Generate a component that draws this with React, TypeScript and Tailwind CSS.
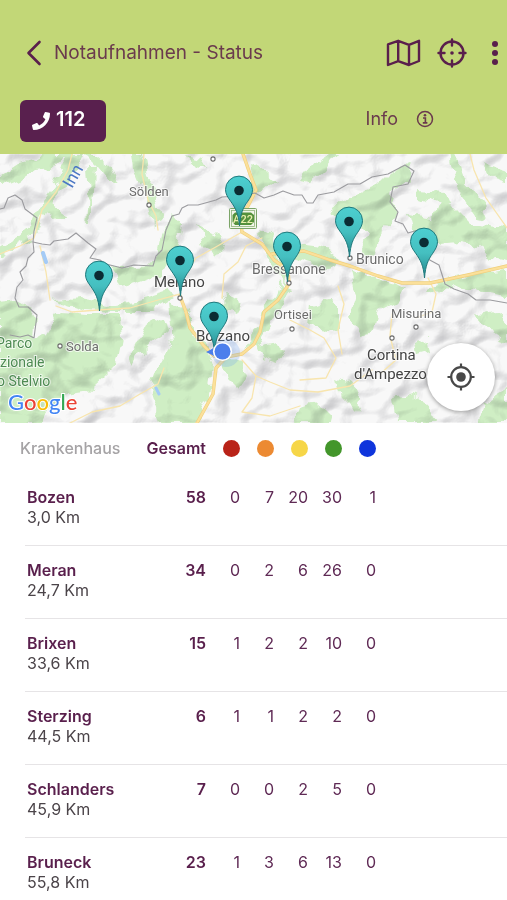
import { FaPhone } from 'react-icons/fa';

type Hospital = {
  name: string;
  distance: string;
  total: number;
  counts: number[];
};

const HOSPITALS: Hospital[] = [
  { name: 'Bozen', distance: '3,0 Km', total: 58, counts: [0, 7, 20, 30, 1] },
  { name: 'Meran', distance: '24,7 Km', total: 34, counts: [0, 2, 6, 26, 0] },
  { name: 'Brixen', distance: '33,6 Km', total: 15, counts: [1, 2, 2, 10, 0] },
  { name: 'Sterzing', distance: '44,5 Km', total: 6, counts: [1, 1, 2, 2, 0] },
  { name: 'Schlanders', distance: '45,9 Km', total: 7, counts: [0, 0, 2, 5, 0] },
  { name: 'Bruneck', distance: '55,8 Km', total: 23, counts: [1, 3, 6, 13, 0] },
];

const TRIAGE = [
  { label: 'Rot', color: 'bg-[#b92318]' },
  { label: 'Orange', color: 'bg-[#ec8a32]' },
  { label: 'Gelb', color: 'bg-[#f6d648]' },
  { label: 'Grün', color: 'bg-[#43962b]' },
  { label: 'Blau', color: 'bg-[#0f35dc]' },
];

// x, top of the pin on the map canvas
const PINS = [
  [239, 22],
  [349, 53],
  [287, 78],
  [424, 74],
  [180, 92],
  [99, 107],
  [214, 148],
];

const FORESTS = [
  'M0 22 L18 10 L34 6 L44 0 L70 0 L52 14 L34 16 L20 26 L0 34Z',
  'M66 0 L82 0 L76 14 L68 26 L58 36 L52 50 L62 56 L64 66 L54 66 L44 60 L36 80 L22 90 L0 102 L0 94 L18 84 L32 72 L42 46 L56 28Z',
  'M84 0 L96 0 L112 14 L120 30 L110 28 L98 14Z',
  'M88 12 L95 12 L94 40 L92 72 L88 70 L90 40Z',
  'M134 0 L142 0 L146 22 L154 32 L160 60 L154 72 L150 50 L142 30 L136 16Z',
  'M170 58 L182 72 L178 96 L168 112 L156 122 L140 128 L120 134 L110 110 L122 114 L153 112 L160 96 L164 76Z',
  'M185 0 L200 4 L206 14 L196 12Z',
  'M248 6 L258 12 L276 28 L264 38 L252 36Z',
  'M300 26 L312 10 L328 0 L336 0 L324 16 L310 28Z',
  'M330 58 L350 42 L374 34 L392 16 L406 11 L413 18 L408 30 L393 35 L390 48 L398 60 L395 67 L380 74 L378 100 L368 108 L360 96 L366 82 L350 66Z',
  'M408 60 L432 64 L440 44 L452 52 L470 70 L507 74 L507 106 L490 102 L474 92 L460 90 L440 92 L412 74Z',
  'M450 0 L462 4 L466 26 L480 46 L486 62 L474 60 L460 40 L454 22Z',
  'M418 36 L446 38 L450 48 L436 50 L420 44Z',
  'M482 10 L507 18 L507 28 L490 24Z',
  'M260 76 L274 82 L280 102 L290 112 L284 130 L274 112 L262 98Z',
  'M290 88 L320 92 L340 106 L330 116 L312 108 L296 104Z',
  'M350 118 L376 124 L410 134 L396 148 L380 156 L376 176 L362 180 L350 164 L356 146Z',
  'M426 134 L456 122 L507 116 L507 142 L490 140 L470 136 L452 130 L440 140Z',
  'M0 150 L18 148 L30 154 L36 164 L34 186 L46 178 L56 162 L62 158 L90 160 L118 160 L121 184 L116 210 L104 222 L86 238 L72 240 L52 250 L40 269 L0 269Z',
  'M52 146 L80 144 L110 150 L136 146 L170 136 L176 142 L150 158 L116 158 L84 156Z',
  'M168 148 L184 154 L194 176 L206 192 L214 212 L210 240 L196 269 L176 269 L160 269 L150 236 L158 214 L172 190Z',
  'M146 172 L164 162 L168 176 L150 190 L140 202 L132 214 L130 204Z',
  'M220 204 L240 206 L248 224 L240 236 L226 222Z',
  'M278 128 L290 134 L282 150 L270 170 L258 190 L248 196 L262 168Z',
  'M312 150 L330 146 L338 152 L338 178 L322 176 L310 168Z',
  'M256 190 L276 186 L286 196 L280 210 L262 204Z',
  'M300 254 L320 250 L332 262 L330 269 L294 269Z',
  'M338 224 L352 230 L362 246 L356 258 L342 244Z',
  'M394 244 L410 240 L430 252 L440 269 L398 269Z',
  'M414 190 L428 186 L430 198 L416 202Z',
  'M474 160 L492 156 L507 168 L507 190 L492 180Z',
  'M484 246 L507 232 L507 269 L478 269Z',
  'M218 152 L228 140 L242 150 L236 160Z',
  'M196 70 L210 78 L224 92 L216 104 L204 92Z',
];

const MINOR_ROADS = [
  'M72 0 L68 16 L56 38 L42 56 L34 84 L20 92 L0 100',
  'M40 92 L46 118 L50 146',
  'M144 0 L142 20 L148 46 L156 62 L158 76',
  'M470 0 L474 16 L486 44 L507 74',
  'M56 152 L72 158 L98 156 L130 154 L158 146 L180 140',
  'M70 269 L92 258 L120 252 L140 240 L158 230 L164 214',
  'M242 78 L228 86 L214 94 L196 104 L184 122',
  'M262 84 L246 92 L238 108 L224 120 L222 144',
  'M242 206 L256 222 L270 228 L290 236 L318 238 L350 232 L372 216',
  'M290 166 L310 176 L324 184 L336 204 L326 224 L300 226',
  'M256 222 L252 244 L242 258 L270 262 L300 252',
  'M392 160 L390 182 L396 206 L380 220',
  'M416 164 L432 158 L436 140 L428 124',
  'M338 132 L344 150 L338 176 L342 200',
];

const MAIN_ROADS = [
  'M243 0 L250 20 L256 36 L248 52 L240 62 L242 78 L262 90 L274 106 L288 116 L289 130 L278 146 L264 158 L260 178 L254 190 L242 200 L226 203 L216 214 L213 240 L197 269',
  'M272 100 L304 97 L330 106 L350 112 L378 122 L402 129 L430 129 L468 121 L507 112',
  'M180 142 L186 158 L190 174 L204 192 L214 202',
];

const BORDERS = [
  'M0 55 L4 54 L8 44 L15 41 L22 46 L25 55 L37 64 L34 77 L33 88 L42 90 L50 91 L54 87 L68 85 L76 79 L82 84 L88 89 L96 95 L90 104 L100 106 L106 110 L122 114 L134 111 L153 112 L156 102 L162 96 L166 76 L172 62 L179 60 L182 54 L188 51 L198 51 L216 46 L222 43 L240 42 L255 39 L264 44 L274 41 L283 37 L294 41 L302 41 L307 49 L313 49 L318 41 L334 38 L348 30 L360 30 L372 23 L388 20 L405 11 L414 17 L408 30 L393 33 L390 48 L398 58 L395 67 L403 70 L408 79 L418 76 L426 104 L439 111 L445 130 L454 135 L468 140 L476 146 L490 146 L507 149',
  'M33 88 L34 98 L28 104 L26 112 L20 118 L23 126 L17 133 L15 144 L19 153 L28 153 L37 161 L34 184 L28 181 L20 183 L10 181',
];

// marker circle and label of every town
const TOWNS = [
  { name: 'Sölden', x: 129, y: 42, size: 13, dot: [149, 51] },
  { name: 'Bressanone', x: 252, y: 120, size: 14, dot: [289, 129] },
  { name: 'Brunico', x: 356, y: 110, size: 14, dot: [350, 104] },
  { name: 'Ortisei', x: 274, y: 165, size: 13, dot: [292, 175] },
  { name: 'Misurina', x: 391, y: 164, size: 13, dot: [416, 173] },
  { name: 'Solda', x: 66, y: 197, size: 13, dot: [60, 192] },
];

const CITIES = [
  { name: 'Merano', x: 154, y: 133, size: 15, dot: [180, 144] },
  { name: 'Bolzano', x: 196, y: 187, size: 15, dot: [214, 197] },
  { name: 'Cortina', x: 367, y: 206, size: 15, dot: [392, 184] },
  { name: "d'Ampezzo", x: 354, y: 225, size: 15 },
];

function Pin({ x, y }: { x: number; y: number }) {
  return (
    <g transform={`translate(${x} ${y})`}>
      <path
        d="M0.5 50 C-0.6 37 -3.6 32 -8.4 25.2 C-11.4 21 -13.5 18 -13.5 13.6 A13.5 13.5 0 0 1 13.5 13.6 C13.5 18 11.6 21 8.8 25.2 C4 32 1.6 37 0.5 50Z"
        fill="url(#pin)"
        stroke="#20797c"
        strokeWidth="1"
      />
      <circle cx="0" cy="14.5" r="4.8" fill="#0b2c33" />
    </g>
  );
}

function TerrainMap() {
  return (
    <svg
      viewBox="0 0 507 269"
      preserveAspectRatio="xMidYMid slice"
      className="block w-full font-[Roboto,sans-serif]"
      role="img"
      aria-label="Karte"
    >
      <defs>
        <linearGradient id="pin" x1="0" y1="0" x2="0" y2="1">
          <stop offset="0" stopColor="#4ccfd0" />
          <stop offset="0.5" stopColor="#45bfc0" />
          <stop offset="1" stopColor="#218488" />
        </linearGradient>
        <filter id="relief" x="0" y="0" width="100%" height="100%" colorInterpolationFilters="sRGB">
          <feTurbulence type="fractalNoise" baseFrequency="0.036 0.044" numOctaves="2" seed="11" />
          <feColorMatrix values="0 0 0 0 0  0 0 0 0 0  0 0 0 0 0  1 0 0 0 0" />
          <feDiffuseLighting surfaceScale="14" diffuseConstant="1.2" lightingColor="#ffffff">
            <feDistantLight azimuth="225" elevation="60" />
          </feDiffuseLighting>
          <feColorMatrix values="0.2 0 0 0 0.8  0 0.2 0 0 0.8  0 0 0.19 0 0.81  0 0 0 1 0" />
        </filter>
        <filter id="rough" x="-5%" y="-5%" width="110%" height="110%">
          <feTurbulence type="fractalNoise" baseFrequency="0.07" numOctaves="2" seed="4" result="n" />
          <feDisplacementMap in="SourceGraphic" in2="n" scale="16" xChannelSelector="R" yChannelSelector="G" />
          <feGaussianBlur stdDeviation="0.7" />
        </filter>
      </defs>

      <rect width="507" height="269" fill="#f8f8f8" />
      <g fill="#cfeec4" filter="url(#rough)">
        {FORESTS.map((d) => (
          <path key={d} d={d} />
        ))}
      </g>
      <rect width="507" height="269" filter="url(#relief)" className="mix-blend-multiply" />

      <g fill="none" strokeLinejoin="round" strokeLinecap="round">
        {MINOR_ROADS.map((d) => (
          <path key={d} d={d} stroke="#f8e5ae" strokeWidth="1.3" />
        ))}
        {MAIN_ROADS.map((d) => (
          <path key={d} d={d} stroke="#f0cf7c" strokeWidth="3.4" />
        ))}
        {MAIN_ROADS.map((d) => (
          <path key={d} d={d} stroke="#fbe09a" strokeWidth="2.2" />
        ))}
        {BORDERS.map((d) => (
          <path key={d} d={d} stroke="#9b9b9f" strokeWidth="1.1" />
        ))}
        <path d="M43 99 L46 108" stroke="#a4cbf6" strokeWidth="4" />
        <path d="M156 234 L159 240" stroke="#a4cbf6" strokeWidth="3" />
      </g>

      <text transform="translate(72 35) rotate(-60)" fontSize="17" fill="#4a76c4">Inn</text>

      <g fill="#6c6c6c" stroke="#ffffff" strokeWidth="2" strokeOpacity="0.7" paintOrder="stroke">
        {TOWNS.map((t) => (
          <text key={t.name} x={t.x} y={t.y} fontSize={t.size}>{t.name}</text>
        ))}
        <g fill="#444444">
          {CITIES.map((t) => (
            <text key={t.name} x={t.x} y={t.y} fontSize={t.size}>{t.name}</text>
          ))}
        </g>
        <g fill="#4d8a52" fontSize="14">
          <text x="-4" y="194">Parco</text>
          <text x="0" y="213">zionale</text>
          <text x="-3" y="232">o Stelvio</text>
        </g>
      </g>
      <g fill="#ffffff" stroke="#6b6b6b" strokeWidth="1.1">
        {[...TOWNS, ...CITIES].map((t) => t.dot && (
          <circle key={t.name} cx={t.dot[0]} cy={t.dot[1]} r="2.1" />
        ))}
        <circle cx="213" cy="5" r="2.1" />
      </g>

      {/* motorway shield */}
      <rect x="229.5" y="54.5" width="27" height="20" rx="1" fill="#f2f6e8" stroke="#7da569" />
      <rect x="231.5" y="56.5" width="23" height="16" fill="none" stroke="#8fb37c" strokeWidth="0.8" />
      <path d="M235 58.5 H251 L254 61 V68 L251 71 H235 L232.500 68 V61Z" fill="#55913c" />
      <text x="243" y="69" fontSize="11" fontWeight="500" textAnchor="middle" fill="#e9efae">A22</text>

      {/* own position */}
      <circle cx="226" cy="199" r="14" fill="#5f9bf5" fillOpacity="0.22" />
      <path d="M206 198 L214 194 L214 202Z" fill="#4b7fea" />
      {PINS.map(([x, y]) => (
        <Pin key={x} x={x} y={y} />
      ))}
      <circle cx="222.500" cy="197.500" r="9.600" fill="#ffffff" />
      <circle cx="222.500" cy="197.500" r="8" fill="#4c7fec" />

      <text
        x="8"
        y="256"
        fontSize="22"
        stroke="#ffffff"
        strokeWidth="2"
        paintOrder="stroke"
        fontFamily="Lato, sans-serif"
        fontWeight="500"
      >
        <tspan fill="#4285f4">G</tspan>
        <tspan fill="#ea4335">o</tspan>
        <tspan fill="#fbbc05">o</tspan>
        <tspan fill="#4285f4">g</tspan>
        <tspan fill="#34a853">l</tspan>
        <tspan fill="#ea4335">e</tspan>
      </text>
    </svg>
  );
}

function Header() {
  return (
    <header className="bg-[#c2d777] pt-[29px] pb-3 pl-5 text-[#591f4c]">
      <div className="flex h-12 items-center">
        <button aria-label="Zurück" className="flex w-[34px] pl-1.5">
          <svg width="17" height="26" viewBox="0 0 17 26" fill="none" stroke="currentColor" strokeWidth="2.6" strokeLinecap="round" strokeLinejoin="round">
            <path d="M13.500 2 L2.500 13 L13.500 24" />
          </svg>
        </button>
        <h1 className="flex-1 truncate text-[19px] text-[#6a3a4d]">Notaufnahmen - Status</h1>
        <button aria-label="Karte anzeigen" className="mr-4">
          <svg width="35" height="28" viewBox="0 0 35 28" fill="none" stroke="currentColor" strokeWidth="2.4" strokeLinejoin="round">
            <path d="M2 5.400 L12.200 1.800 L23 5.800 L33 1.800 V22 L23 26 L12.200 22.200 L2 26Z M12.200 1.800 V22.200 M23 5.800 V26" />
          </svg>
        </button>
        <button aria-label="Position zentrieren" className="mr-6">
          <svg width="30" height="30" viewBox="0 0 30 30" fill="none" stroke="currentColor" strokeWidth="2.4" strokeLinecap="round">
            <circle cx="15" cy="15" r="11.500" />
            <path d="M15 1.500 V7.500 M15 22.500 V28.500 M1.500 15 H7.500 M22.500 15 H28.500" />
            <circle cx="15" cy="15" r="1.800" fill="currentColor" stroke="none" />
          </svg>
        </button>
        <button aria-label="Menü" className="mr-2">
          <svg width="8" height="26" viewBox="0 0 8 26" fill="currentColor">
            <circle cx="4" cy="4" r="3" />
            <circle cx="4" cy="13" r="3" />
            <circle cx="4" cy="22" r="3" />
          </svg>
        </button>
      </div>

      <div className="mt-[23px] flex h-[42px] justify-between pr-[73px]">
        <a href="tel:112" className="flex w-[86px] items-center gap-1.5 rounded-md bg-[#59204e] pb-1 pl-3 text-xl font-semibold text-white">
          <FaPhone size={18} className="mt-1" />
          112
        </a>
        <button className="flex h-[38px] items-center gap-[18px] text-lg text-[#6a3a4d]">
          Info
          <svg width="18" height="18" viewBox="0 0 18 18" fill="none" stroke="currentColor">
            <circle cx="9" cy="9" r="7.500" strokeWidth="1.500" />
            <circle cx="9" cy="5.300" r="1.300" fill="currentColor" stroke="none" />
            <path d="M7 8 H9.400 V12.800 M6.800 12.900 H11.400" strokeWidth="1.600" />
          </svg>
        </button>
      </div>
    </header>
  );
}

function HospitalTable() {
  return (
    <table className="w-full border-separate border-spacing-0 text-[#5f2a55]">
      <thead>
        <tr className="h-[50px]">
          <th scope="col" className="w-[130px] p-0 pl-5 text-left text-base font-medium text-[#a5a3a5]">Krankenhaus</th>
          <th scope="col" className="w-[76px] p-0 text-right text-base font-semibold text-[#591f4c]">Gesamt</th>
          {TRIAGE.map((t) => (
            <th key={t.label} scope="col" className="w-[34px] p-0">
              <span role="img" aria-label={t.label} className={`ml-auto block size-[17px] rounded-full ${t.color}`} />
            </th>
          ))}
          <th className="p-0" />
        </tr>
      </thead>
      <tbody>
        {HOSPITALS.map((h) => (
          <tr key={h.name} className="align-top text-base leading-5">
            <th scope="row" className="p-0 pl-[25px] text-left font-normal">
              <div className="border-b border-[#e6e4e6] pt-3.5 pb-[18px] pl-0.5">
                <div className="font-semibold text-[#591f4c]">{h.name}</div>
                <div className="text-[#4b4449]">{h.distance}</div>
              </div>
            </th>
            <td className="border-b border-[#e6e4e6] p-0 pt-3.5 text-right font-semibold text-[#591f4c]">{h.total}</td>
            {h.counts.map((count, i) => (
              <td key={i} className="border-b border-[#e6e4e6] p-0 pt-3.5 text-right">{count}</td>
            ))}
            <td className="border-b border-[#e6e4e6] p-0" />
          </tr>
        ))}
      </tbody>
    </table>
  );
}

export default function App() {
  return (
    <div className="flex h-screen flex-col bg-white font-[Inter,sans-serif]">
      <Header />

      <div className="relative shrink-0">
        <TerrainMap />
        <button
          aria-label="Mein Standort"
          className="absolute right-3 bottom-3 flex size-[68px] items-center justify-center rounded-full bg-white text-[#484848] shadow-[0_1px_4px_rgba(0,0,0,0.4)]"
        >
          <svg width="28" height="28" viewBox="0 0 28 28" fill="none" stroke="currentColor" strokeWidth="2.2">
            <circle cx="14" cy="14" r="9.800" />
            <circle cx="14" cy="14" r="4.800" fill="currentColor" stroke="none" />
            <path d="M14 0.500 V4.500 M14 23.500 V27.500 M0.500 14 H4.500 M23.500 14 H27.500" />
          </svg>
        </button>
      </div>

      <main className="min-h-0 flex-1 overflow-y-auto [scrollbar-width:none]">
        <HospitalTable />
      </main>
    </div>
  );
}
